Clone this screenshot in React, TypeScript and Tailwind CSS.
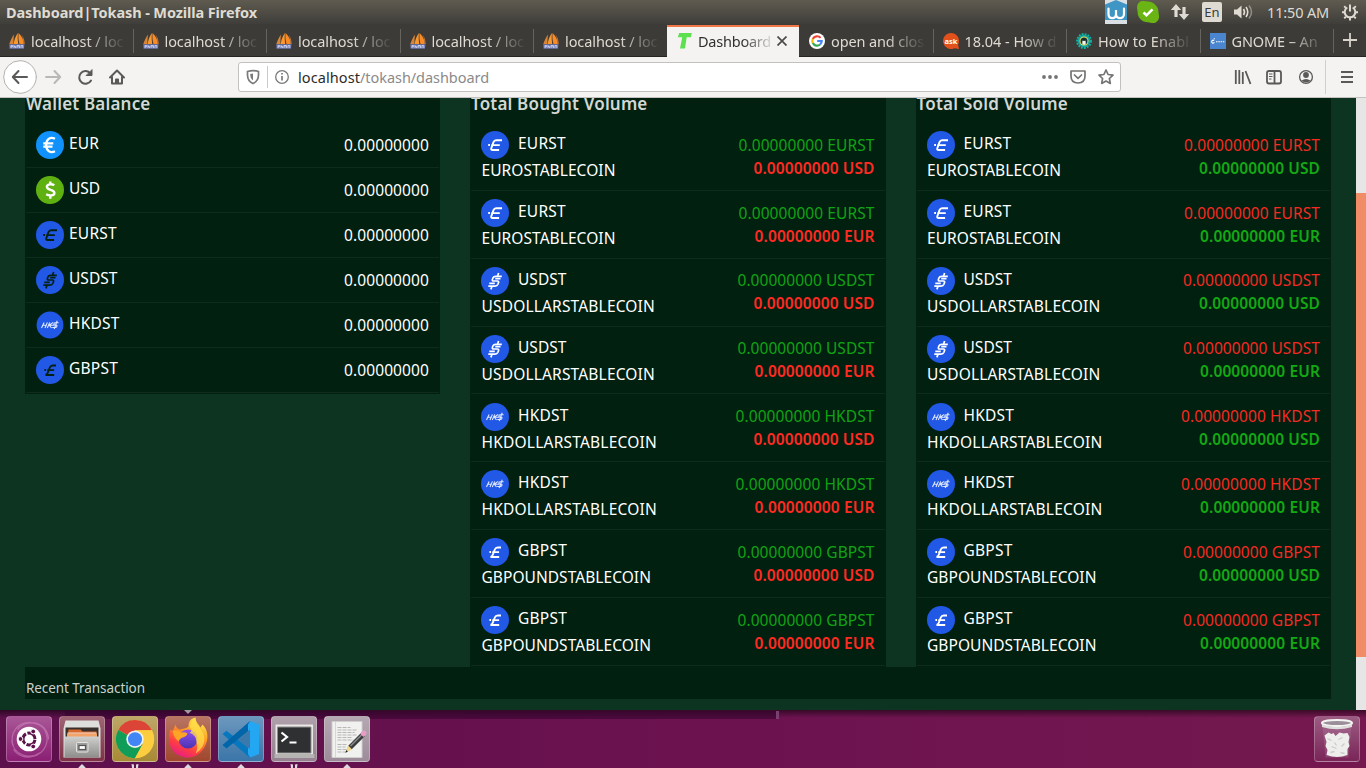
import React, { useLayoutEffect, useRef, useState } from "react";
import type { ReactNode } from "react";

/* Text whose tracking is adjusted so the run takes a given width. */
function Fit({ w, className = "", children }: { w: number; className?: string; children: string }) {
  const ref = useRef<HTMLSpanElement>(null);
  const [tracking, setTracking] = useState(0);
  useLayoutEffect(() => {
    if (!ref.current) return;
    const natural = ref.current.getBoundingClientRect().width;
    setTracking((w - natural) / children.length);
  }, []);
  return (
    <span ref={ref} className={`inline-block whitespace-pre ${className}`} style={{ letterSpacing: `${tracking}px` }}>
      {children}
    </span>
  );
}

/* ---------- coin badges ---------- */

function CoinIcon({ coin, dark = false }: { coin: string; dark?: boolean }) {
  const ink = dark ? "#032113" : "#ffffff";
  if (coin === "EUR")
    return (
      <svg viewBox="0 0 28 28" className="h-7 w-7 shrink-0">
        <circle cx="14" cy="14" r="14" fill="#1191fb" />
        <path d="M19 7.800C14 5.400 10.200 8.500 10.200 14s3.800 8.600 8.800 6.200M7.300 12.300H17.300M7.300 15.700H16.500" fill="none" stroke="#fff" strokeWidth="2.300" />
      </svg>
    );
  if (coin === "USD")
    return (
      <svg viewBox="0 0 28 28" className="h-7 w-7 shrink-0">
        <circle cx="14" cy="14" r="14" fill="#5fb112" />
        <path d="M18.300 9.200c-2.500-1.400-7.400-1.400-7.400 1.600 0 3.800 7.500 2.200 7.500 6.100 0 3-5.300 3-8.200 1.400M14.300 5.500v3M14.300 19.500v3.200" fill="none" stroke="#fff" strokeWidth="2.400" />
      </svg>
    );
  return (
    <svg viewBox="0 0 28 28" className="h-7 w-7 shrink-0">
      <circle cx="14" cy="14" r={coin === "HKDST" && dark ? 13.400 : 14} fill="#2158e6" />
      {coin === "EURST" && (
        <g fill="none" stroke={ink} strokeWidth="1.900">
          <path d="M21 9.200h-6c-1.500 0-2 .8-2.500 2L10.300 17.300c-.4 1.200.2 1.700 1.200 1.700h6.600" />
          <path d="M7.200 14h1.800M10.500 14.100h8.300" />
        </g>
      )}
      {coin === "GBPST" && (
        <g fill="none" stroke={ink} strokeWidth="1.900">
          <path d="M20 9.500h-3.300c-1.600 0-2.400.8-2.900 2l-1.900 5c-.5 1.500-1.300 2.300-2.400 2.500h8.700" />
          <path d="M8.400 14h1.700M11.300 14.100h6.800" />
        </g>
      )}
      {coin === "USDST" && (
        <g fill="none" stroke={ink} strokeWidth="1.700">
          <path d="M20.800 9.300h-6c-1.700 0-2.500.6-2.900 1.800l-.5 1.400c-.3 1 .2 1.500 1.200 1.500h3.800c1.100 0 1.500.6 1.100 1.600l-.6 1.700c-.5 1.300-1.400 1.900-2.900 1.900H7.300" />
          <path d="M14.200 11.700h5.300M8.300 16.400h5.500M16.600 8.900l1-3M10.900 19.500l-1 2.900" />
        </g>
      )}
      {coin === "HKDST" && (
        <g fill="none" stroke="#dfe8ff" strokeWidth="1.100">
          <path d="M5.500 17l2.600-5.600M9 17l2.400-5.600M6.800 14.300h4M11.300 17l2.400-5.600M12.500 14.300h5.500M13.200 14.300l4-2.900M13.500 14.300l2 2.700" />
          <path d="M22.600 11.700h-3c-1 0-1.500.3-1.700 1-.2.900.1 1.300 1 1.300h1c1 0 1.200.5 1 1.300-.3.900-.8 1.200-1.700 1.200h-3M21.200 9.800l-3 8.200" />
        </g>
      )}
    </svg>
  );
}

/* ---------- data ---------- */

const wallet: [string, number][] = [
  ["EUR", 30],
  ["USD", 31],
  ["EURST", 48],
  ["USDST", 48.5],
  ["HKDST", 50.5],
  ["GBPST", 49],
];

const coins = [
  { code: "EURST", name: "EUROSTABLECOIN", codeW: 48, nameW: 134.5, amountW: 136 },
  { code: "USDST", name: "USDOLLARSTABLECOIN", codeW: 48.5, nameW: 174, amountW: 137 },
  { code: "HKDST", name: "HKDOLLARSTABLECOIN", codeW: 50.5, nameW: 176, amountW: 139 },
  { code: "GBPST", name: "GBPOUNDSTABLECOIN", codeW: 49, nameW: 170, amountW: 137 },
];

const pairs = coins.flatMap((c) => [
  { ...c, quote: "USD", quoteW: 121 },
  { ...c, quote: "EUR", quoteW: 120 },
]);

function Heading({ w, children }: { w: number; children: string }) {
  return (
    <h2 className="-mt-1.5 h-[31px] pl-px text-[17px] leading-6 font-semibold text-[#d3d8d4]">
      <Fit w={w}>{children}</Fit>
    </h2>
  );
}

function VolumeCard({ title, titleW, sold = false }: { title: string; titleW: number; sold?: boolean }) {
  const base = sold ? "text-[#f52a22]" : "text-[#12a314]";
  const quote = sold ? "text-[#14a914]" : "text-[#ff2a22]";
  return (
    <section className="h-[569px] w-[415.500px] bg-[#012010]">
      <Heading w={titleW}>{title}</Heading>
      <ul className="px-px">
        {pairs.map((p) => (
          <li key={p.code + p.quote} className="flex h-[67.850px] justify-between border-b border-[#0e2b1d] px-[10px]">
            <div className="pt-[8.200px]">
              <div className="flex gap-[9px]">
                <CoinIcon coin={p.code} />
                <Fit w={p.codeW} className="leading-6 text-white">{p.code}</Fit>
              </div>
              <Fit w={p.nameW} className="-mt-px block pl-[0.500px] leading-6 text-white">{p.name}</Fit>
            </div>
            <div className="flex flex-col items-end pt-[9.750px]">
              <Fit w={p.amountW} className={`leading-6 ${base}`}>{`0.00000000 ${p.code}`}</Fit>
              <Fit w={p.quoteW} className={`-mt-px leading-6 font-semibold ${quote}`}>{`0.00000000 ${p.quote}`}</Fit>
            </div>
          </li>
        ))}
      </ul>
    </section>
  );
}

/* ---------- browser chrome ---------- */

function Boat() {
  return (
    <svg viewBox="0 0 16 16" className="h-4 w-4 shrink-0">
      <path d="M5.200 1.500C3 4 1.500 7.500.3 11h4.300C4.300 7 4.600 4 5.200 1.500z" fill="#d98536" />
      <path d="M9 0C6.500 3 5 7 4.800 11h4.500C8.600 7 8.500 3 9 0z" fill="#f8982f" />
      <path d="M9.500 0c-.3 4 0 8 1 11h4.500C14.500 6.500 12.500 2.500 9.500 0z" fill="#f98a25" />
      <path d="M12.500 1.500c1.500 3 2 6 1.600 9.500h1.700c-.2-4-1.300-7-3.300-9.500z" fill="#b8753c" />
      <path d="M.2 11.200h15.300l-.6 4.500H.6z" fill="#6c78af" />
      <path d="M2 15v-2.500h1.500v1.300H2M5 12v3M5 13.500h1.500V15M8 15v-2.500h1v2M9 12.500h1.500V15M12 15v-2.500h1.800V15" stroke="#d5daf2" strokeWidth=".8" fill="none" />
    </svg>
  );
}

function TLogo() {
  return (
    <svg viewBox="0 0 16 16" className="h-4 w-4 shrink-0">
      <path d="M2.200 0H14.800l-1 4.300H9.700L8 15.500H3L5.200 4.300H.8z" fill="#5ce04f" />
    </svg>
  );
}

function Google() {
  return (
    <svg viewBox="0 0 16 16" className="h-4 w-4 shrink-0">
      <circle cx="8" cy="8" r="8" fill="#fff" />
      <g fill="none" strokeWidth="2.200">
        <path d="M11.600 4.900A4.700 4.700 0 0 0 3.800 5.900" stroke="#ea4335" />
        <path d="M3.800 5.900a4.700 4.700 0 0 0 0 4.200" stroke="#fbbc05" />
        <path d="M3.800 10.100a4.700 4.700 0 0 0 7.300 1.400" stroke="#34a853" />
        <path d="M11.100 11.500A4.700 4.700 0 0 0 12.700 8H8.200" stroke="#4285f4" />
      </g>
    </svg>
  );
}

function Ask() {
  return (
    <svg viewBox="0 0 16 16" className="h-4 w-4 shrink-0">
      <path d="M8 0a8 8 0 1 0 3.500 15.200L16 16l-.9-4.300A8 8 0 0 0 8 0z" fill="#e2501c" />
      <text x="8" y="10.700" textAnchor="middle" fontSize="7.500" fontWeight="700" fill="#fff">ask</text>
    </svg>
  );
}

function Gear() {
  return (
    <svg viewBox="0 0 16 16" className="h-4 w-4 shrink-0">
      <circle cx="8" cy="8" r="6.900" fill="none" stroke="#10b5ab" strokeWidth="2" strokeDasharray="1.800 1.200" />
      <circle cx="8" cy="8" r="6.300" fill="#12a59e" />
      <circle cx="8" cy="8" r="4.500" fill="#e8df5a" />
      <circle cx="8" cy="8" r="3.500" fill="#17343e" />
      <path d="M6.300 11V8.800a1.700 1.700 0 0 1 3.400 0V11L8 12z" fill="#f5f5ef" />
      <circle cx="8" cy="6.800" r="1.200" fill="#222" />
    </svg>
  );
}

function Gnome() {
  return (
    <svg viewBox="0 0 16 16" className="h-4 w-4 shrink-0">
      <path d="M0 0h16v16H0z" fill="#4a86cf" />
      <path d="M4.200 7.500C2.500 6.500 1 8 2 9.600c.6 1.100 2 .9 2.200-.4M4 6l.6-.6M6 8.800h1.500M8.300 8.800h1.500M10.600 8.800H12M12.800 8.800h1.500" stroke="#fff" strokeWidth="1.100" fill="none" />
    </svg>
  );
}

function Tab({ icon, label, w, last = false }: { icon: ReactNode; label: string; w: number; last?: boolean }) {
  return (
    <div className="flex h-8 w-[133.500px] shrink-0 items-center pt-px pl-[9px]">
      {icon}
      <div className="ml-1.5 w-[95px] [mask-image:linear-gradient(to_right,black_58%,transparent_100%)]">
        <Fit w={w} className="text-[14.500px] leading-6 text-[#dfdbd2]">{label}</Fit>
      </div>
      <i className={`ml-auto h-6 w-px ${last ? "bg-transparent" : "bg-[#66645f]"}`} />
    </div>
  );
}

function TitleBar() {
  return (
    <header className="flex h-6 items-center bg-linear-to-b from-[#5f5b50] to-[#3f3e3a] pl-1.5 text-[#dfdbd2]">
      <Fit w={251} className="-mt-px text-[14.500px] leading-6 font-bold">Dashboard|Tokash - Mozilla Firefox</Fit>
      <svg viewBox="0 0 22 24" className="ml-auto h-6 w-[22px]">
        <path d="M0 0h22v24H0z" fill="#d9dfe2" />
        <path d="M0 4.500 11 0l11 4.500V20H0z" fill="#3f95c3" />
        <path d="M3.500 8.500v5.500c0 5.500 7.500 5.500 7.500 0v-4 4c0 5.500 8 5.500 8 0V8.500" fill="none" stroke="#fff" strokeWidth="2.200" strokeLinecap="round" />
      </svg>
      <svg viewBox="0 0 22 22" className="ml-2.5 h-[22px] w-[22px]">
        <path d="M6 0c1.800 0 2.800.3 5 .5C17 1 21.500 5.500 21.500 11c0 2 .8 3 .5 5.500-.4 3.500-3 5.500-6 5.500-2 0-3-.8-5-.8C5 21.200.6 17 .6 11c0-2-.8-3-.5-5.500C.5 2 3 0 6 0z" fill="#6ab414" />
        <path d="m6.500 11.500 3 2.800 6-6" fill="none" stroke="#fff" strokeWidth="2.600" />
      </svg>
      <svg viewBox="0 0 20 18" className="ml-[11px] h-[18px] w-5" fill="#dfdbd2">
        <path d="M6 1 .8 7H4.400v7h3.200V7H11.200zM14 17 8.800 11h3.600V4h3.200v7H19.200z" />
      </svg>
      <span className="ml-3 flex h-5 w-5 items-center justify-center rounded-[2px] bg-[#dfdbd2] text-[13px] text-[#3c3b37]">
        <span className="mt-px">En</span>
      </span>
      <svg viewBox="0 0 22 18" className="ml-3 h-[18px] w-[22px]" fill="none" stroke="#dfdbd2" strokeWidth="1.600">
        <path d="M0 6.500h3L7.500 2.500v13L3 11.500H0z" fill="#dfdbd2" stroke="none" />
        <path d="M9.500 6q2 3 0 6M12 4q3.500 5 0 10" />
        <path d="M15 2.500q5 6.500 0 13" opacity=".45" />
      </svg>
      <Fit w={62} className="-mt-px ml-[11px] text-[14.500px] leading-6">11:50 AM</Fit>
      <svg viewBox="0 0 18 18" className="mr-[7px] ml-3 h-[18px] w-[18px]" fill="none" stroke="#dfdbd2" strokeWidth="2">
        <path d="M6.300 4.500a5.300 5.300 0 1 0 5.400 0M9 1.500V8.500" />
        <path d="m3.200 3.200 1.600 1.600M14.800 3.200l-1.600 1.600M1 9.300h2.300M14.700 9.300H17M3.200 15.300l1.700-1.600M14.800 15.300l-1.700-1.600M9 15v2.500" strokeWidth="1.900" />
      </svg>
    </header>
  );
}

function TabBar() {
  return (
    <nav className="flex h-[33px] items-start border-b border-[#262522] bg-[#3c3b37]">
      {[0, 1, 2, 3, 4].map((i) => (
        <Tab key={i} icon={<Boat />} label="localhost / loc" w={92.5} last={i === 4} />
      ))}
      <div className="mt-px -ml-[0.500px] flex h-8 w-[132px] shrink-0 items-center border-t-2 border-[#f07746] bg-[#f5f3f2] pb-[3px] pl-2.5">
        <TLogo />
        <div className="ml-[5px] w-[74px] [mask-image:linear-gradient(to_right,black_60%,transparent_105%)]">
          <Fit w={73} className="text-[14.500px] leading-6 text-[#30302e]">Dashboard</Fit>
        </div>
        <svg viewBox="0 0 10 10" className="ml-[5px] h-2.5 w-2.5" stroke="#4c4b49" strokeWidth="1.700">
          <path d="m.5.5 9 9M9.500.5l-9 9" />
        </svg>
      </div>
      <div className="w-px" />
      <Tab icon={<Google />} label="open and clos" w={93} />
      <Tab icon={<Ask />} label="18.04 - How d" w={92} />
      <Tab icon={<Gear />} label="How to Enabl" w={91} />
      <Tab icon={<Gnome />} label="GNOME – An" w={86} />
      <svg viewBox="0 0 14 14" className="mt-[9px] ml-[9px] h-3.5 w-3.5 shrink-0" stroke="#d8d4cb" strokeWidth="1.800">
        <path d="M7 0v14M0 7h14" />
      </svg>
    </nav>
  );
}

function Toolbar() {
  return (
    <div className="flex h-[41px] items-center border-b border-[#c3c2c0] bg-[#f5f3f2]">
      <svg viewBox="0 0 130 40" className="h-10 w-[130px] shrink-0" fill="none" stroke="#5a5957" strokeWidth="2" strokeLinecap="round" strokeLinejoin="round">
        <circle cx="20" cy="20" r="16.300" fill="#fff" stroke="#b3b2b0" strokeWidth="1" />
        <path d="M13 20h14M18.500 14 12.800 20l5.700 6" />
        <path d="M46 20h14M54.500 14l5.700 6-5.700 6" stroke="#b9b8b6" />
        <path d="M91 23.500A6.300 6.300 0 1 1 90 16" />
        <path d="M92 13v5.500h-5.500z" fill="#5a5957" strokeWidth="1" />
        <path d="M110 20.500 117 13.500l7 7M112 20v6.500h10V20M116 26v-3.500h2V26" />
      </svg>
      <div className="ml-[108px] flex h-[30px] w-[883px] shrink-0 items-center rounded-[3px] border border-[#c2c1bf] bg-white">
        <svg viewBox="0 0 60 28" className="h-7 w-[60px]" fill="none" stroke="#7b7a79" strokeWidth="1.700">
          <path d="M8.500 8.500Q14 6.800 19.500 8.500V12q0 6-5.500 8.500Q8.500 18 8.500 12z" />
          <path d="M14 10.500v7q-2.800-2-2.800-6.500z" fill="#7b7a79" stroke="none" />
          <path d="M28.500 3v22" stroke="#cbcac8" strokeWidth="1" />
          <circle cx="43" cy="14" r="6.300" strokeWidth="1.300" />
          <path d="M43 13v4.500M43 10v1.600" />
        </svg>
        <span className="ml-[-1px] text-[14.500px] leading-6 text-[#8b8a89]">
          <Fit w={62} className="text-[#2c2c2b]">localhost</Fit>
          <Fit w={129}>/tokash/dashboard</Fit>
        </span>
        <svg viewBox="0 0 80 28" className="mr-1 ml-auto h-7 w-20" fill="none" stroke="#757473" strokeWidth="1.700" strokeLinejoin="round">
          <g fill="#757473" stroke="none">
            <circle cx="8" cy="14" r="1.900" />
            <circle cx="14" cy="14" r="1.900" />
            <circle cx="20" cy="14" r="1.900" />
          </g>
          <path d="M35 8h14v5q0 7-7 7t-7-7z" />
          <path d="m38.500 12 3.500 3.300 3.500-3.300" strokeLinecap="round" />
          <path d="m70 7 2.100 4.500 4.900.6-3.600 3.400.9 4.900-4.300-2.400-4.300 2.400.9-4.900-3.600-3.400 4.900-.6z" />
        </svg>
      </div>
      <svg viewBox="0 0 136 40" className="ml-auto h-10 w-[136px] shrink-0" fill="none" stroke="#5a5957" strokeWidth="1.800">
        <path d="M5.800 13v14M9.300 13v14M12.800 15v12M15.500 14l5 13" />
        <rect x="37" y="14" width="14" height="12.500" rx="2" />
        <path d="M44.500 14v12.500" />
        <path d="M39 17h3.500M39 19.500h3.500M39 22h2.500" strokeWidth="1" />
        <circle cx="76" cy="20" r="6.400" strokeWidth="1.300" />
        <circle cx="76" cy="18" r="2.900" fill="#5a5957" stroke="none" />
        <path d="M71.500 23.500q4.500-3 9 0-4.500 4-9 0z" fill="#5a5957" stroke="none" />
        <path d="M95.500 3v34" stroke="#d0cfcd" strokeWidth="1" />
        <path d="M111 15h12M111 20h12M111 25h12" strokeWidth="2" />
      </svg>
    </div>
  );
}

/* ---------- launcher ---------- */

function Tile({ className, children }: { className: string; children: ReactNode }) {
  return (
    <div className={`h-[46px] w-[46px] shrink-0 overflow-hidden rounded-[4px] border border-white/25 bg-linear-to-b from-white/25 to-transparent ${className}`}>
      <svg viewBox="0.5 0.5 44 44" className="h-full w-full">{children}</svg>
    </div>
  );
}

function Marks({ kind }: { kind: "one" | "two" | "none" }) {
  return (
    <svg viewBox="0 0 10 5" className="mt-px h-[5px] w-2.5" fill="#dddadd">
      {kind === "one" && <path d="M5 1 8.500 4.500V5h-7V4.500z" />}
      {kind === "two" && <path d="M1.500 1 4 1.500V5H2zM6 1.500 8.500 1 8 5H6z" />}
    </svg>
  );
}

function DockItem({ marks, children }: { marks: "one" | "two" | "none"; children: ReactNode }) {
  return (
    <div className="flex w-[53px] flex-col items-center pt-1.5">
      {children}
      <Marks kind={marks} />
    </div>
  );
}

function Dock() {
  return (
    <footer className="relative flex h-[58px] bg-linear-to-r from-[#5d104c] via-[#6b124f] to-[#75184f] px-[2.500px]">
      <div className="absolute inset-x-0 top-0 h-2 bg-linear-to-b from-black/50 to-transparent" />
      <div className="absolute top-px left-[65px] h-2 w-[711px] bg-[#35052f]/60" />
      <div className="absolute top-px left-[776px] h-2 w-[3px] bg-[#7a3f70]" />
      <svg viewBox="0 0 8 4" className="absolute top-0 left-[183.500px] h-1 w-2" fill="#9c9c9c"><path d="M0 0h8L4 4z" /></svg>
      <div className="relative flex">
        <DockItem marks="none">
          <Tile className="bg-[#8b1f73]">
            <g fill="none" stroke="#d68bc5" strokeWidth="1.200" opacity=".55">
              <path d="M7 30C2 16 12 5 25 6c11 0 17 9 17 17M38 13c6 11 1 24-12 27-7 2-15-1-19-7M11 13C20 2 36 6 40 17M5 24c2 14 17 20 29 12" />
            </g>
            <circle cx="22.500" cy="22.500" r="12.300" fill="#fff" />
            <circle cx="22.500" cy="22.500" r="6" fill="none" stroke="#5b1248" strokeWidth="3" strokeDasharray="11 1.560" strokeDashoffset="-.8" />
            <g fill="#5b1248" stroke="#fff" strokeWidth="1">
              <circle cx="14" cy="22.500" r="2.400" />
              <circle cx="26.700" cy="15" r="2.400" />
              <circle cx="26.700" cy="30" r="2.400" />
            </g>
          </Tile>
        </DockItem>
        <DockItem marks="one">
          <Tile className="bg-[#7e3146]">
            <defs>
              <linearGradient id="cab" x2="0" y2="1"><stop stopColor="#cfcfcd" /><stop offset="1" stopColor="#8d8d8b" /></linearGradient>
            </defs>
            <path d="M6 4h33l2 8v29H4V12z" fill="#dededc" />
            <path d="M6 11h33v11H6z" fill="#3a302b" />
            <path d="M9 13h12l2 2h14v7H8z" fill="#d8672b" />
            <path d="M7.500 17h30v5h-30z" fill="#f3a268" />
            <path d="M8 16.500h29" stroke="#fff" strokeWidth=".8" />
            <path d="M5 20h35v21H5z" fill="url(#cab)" />
            <rect x="17" y="26" width="11.500" height="9.500" rx="1" fill="#9c9c9a" stroke="#e5e5e3" strokeWidth="1" />
            <rect x="19.500" y="29" width="6.500" height="4" fill="#fff" stroke="#555" strokeWidth="1.200" />
          </Tile>
        </DockItem>
        <DockItem marks="two">
          <Tile className="bg-[#a88a35]">
            <circle cx="22.500" cy="22.700" r="19" fill="#fcc934" />
            <path d="M22.500 22.700 5.800 13.400a19 19 0 0 1 33.600.3H22.500z" fill="#dc4437" />
            <path d="M22.500 22.700 5.800 13.400A19 19 0 0 0 22.500 41.700l7.800-14.500z" fill="#109d58" />
            <path d="M22.500 13.700h16.900a19 19 0 0 1-16.900 28l8-14.500z" fill="#fdcd40" />
            <circle cx="22.500" cy="22.700" r="8.700" fill="#f1f1f1" />
            <circle cx="22.500" cy="22.700" r="7" fill="#4285f4" />
          </Tile>
        </DockItem>
        <DockItem marks="one">
          <Tile className="bg-[#a1472e]">
            <defs>
              <linearGradient id="fx" x1=".8" y1="0" x2=".3" y2="1"><stop stopColor="#fff052" /><stop offset=".4" stopColor="#ff9b24" /><stop offset=".75" stopColor="#ff3c43" /><stop offset="1" stopColor="#e51e84" /></linearGradient>
              <linearGradient id="globe" x2="0" y2="1"><stop stopColor="#9450ee" /><stop offset="1" stopColor="#4a34b2" /></linearGradient>
            </defs>
            <path d="M5 13q1 0 2 2l3-7q0 3 4 5c4-1 6-.5 9-3 0-5 2-8 7-9 0 5 3 6 5 10l2-3c5 5 6 12 4 18-3 9-10 15-18.500 15C12 41 3 33 3.500 22q0-6 1.500-9z" fill="url(#fx)" />
            <circle cx="22.500" cy="22.500" r="9.500" fill="url(#globe)" />
            <path d="M7 14q6-1 9 2 4-1 6 1-1 3-5 4-3 1-4 4-5-4-6-11z" fill="#ffa526" />
            <path d="M24 10q2-7 6-8 0 5 4 9 8 9 3 19-3 5-7 7 3-6 1-11 0-7-7-10 4-1 0-6z" fill="#ffe14a" opacity=".75" />
          </Tile>
        </DockItem>
        <DockItem marks="one">
          <Tile className="bg-[#3b75a8]">
            <path d="M4 17.500 8 14.300 33 34l-1.500 7.500z" fill="#0878be" />
            <path d="M4 28.500 8 32 33 12l-1.500-7.500z" fill="#0065a9" />
            <path d="M31.500 4.500 40.500 8v29.500l-9 3.500-2-3.500V8z" fill="#24a7f2" />
            <path d="m31.500 13-12 10 12 9.500z" fill="#3b78ab" />
          </Tile>
        </DockItem>
        <DockItem marks="two">
          <Tile className="bg-[#95818f]">
            <path d="M4 8h37.500v33H4z" fill="#e9e8e6" />
            <path d="M3 37.500h40v4H3z" fill="#b5b4b2" />
            <path d="M6 10.500h33.500v26H6z" fill="#2e3031" stroke="#8d8d8b" />
            <path d="m10 16 5.500 4.500L10 25M18 26h7" fill="none" stroke="#fff" strokeWidth="2.200" />
          </Tile>
        </DockItem>
        <DockItem marks="one">
          <Tile className="bg-[#9d8b99]">
            <path d="M7.500 5h30v36h-30z" fill="#f1f1ef" stroke="#cfcfcd" />
            <path d="M11 5v36" stroke="#eebcbc" strokeWidth=".7" />
            <path d="M13 11h13M13 13.500h20M13 16h17M13 18.500h19M13 21h14M13 23.500h16M13 28h10M13 30.500h8M13 33h11M13 35.500h8" stroke="#b7b7b5" strokeWidth="1" strokeDasharray="4 1" />
            <path d="m22 35 2-6 13-13 3.500 3.500-13 13z" fill="#3a3b3c" />
            <path d="m26 29.500 12-12" stroke="#8a8b8c" strokeWidth="1.500" />
            <path d="m21 36 2.700-7 4 4z" fill="#f0d98a" />
            <path d="m35.500 17 2.500-2.500q2-1 3.300.3t.2 3.200L39 20.500z" fill="#e99cc6" />
            <path d="m20.800 36.200 1-2.600 1.600 1.600z" fill="#222" />
          </Tile>
        </DockItem>
      </div>
      <div className="relative ml-auto flex">
        <DockItem marks="none">
          <Tile className="bg-[#7a2558]">
            <path d="m8 9 3 32h23l3-32z" fill="#c79ab5" opacity=".22" />
            <path d="m10 19 4-3 3 1.500 2-1 2 3 4-3.500 4 1 4-.5 2 4-1 5 1 4-2 3v6q-10.500 4-21 0l1-5-2-4 1-4z" fill="#eeeeec" />
            <path d="m13 22 4 2M24 23l4-2M17 30l5 2M27 30l3-3M16 36l4-1M26 36l4 1M20 26l2 3" stroke="#cbccca" strokeWidth="1.300" fill="none" />
            <ellipse cx="22.500" cy="6.500" rx="15" ry="3" fill="#9b8f99" stroke="#f4f4f2" strokeWidth="2" />
            <path d="M7.500 8q15 5 30 0v2.500q-15 4.500-30 0z" fill="#dededc" />
          </Tile>
        </DockItem>
      </div>
    </footer>
  );
}

export default function App() {
  return (
    <div className="flex h-[768px] w-[1366px] flex-col overflow-hidden font-['Noto_Sans','Open_Sans',sans-serif]">
      <TitleBar />
      <TabBar />
      <Toolbar />
      <div className="flex h-[612px]">
        <main className="h-[612px] w-[1356px] overflow-hidden bg-[#0c3420] pr-[25px] pl-[25px] text-[15.500px]">
          <div className="flex items-start justify-between">
            <section className="h-[296px] w-[415px] bg-[#012010]">
              <Heading w={124.5}>Wallet Balance</Heading>
              <ul className="px-px">
                {wallet.map(([code, w]) => (
                  <li key={code} className="flex h-[45px] justify-between border-b border-[#0e2b1d] px-[10px]">
                    <div className="flex gap-[5px] pt-2">
                      <CoinIcon coin={code} dark />
                      <Fit w={w} className="leading-6 text-white">{code}</Fit>
                    </div>
                    <Fit w={85} className="pt-2.5 leading-6 text-white">0.00000000</Fit>
                  </li>
                ))}
              </ul>
            </section>
            <VolumeCard title="Total Bought Volume" titleW={176.5} />
            <VolumeCard title="Total Sold Volume" titleW={151.5} sold />
          </div>
          <section className="h-8 bg-[#012010] pt-[9px] pl-px text-[13.500px] leading-6 text-[#c9d0cb]">
            <Fit w={119}>Recent Transaction</Fit>
          </section>
        </main>
        <aside className="w-2.5 bg-[#e6e6e6] pt-[95px]">
          <div className="h-[464px] bg-[#f08d66]" />
        </aside>
      </div>
      <Dock />
    </div>
  );
}
